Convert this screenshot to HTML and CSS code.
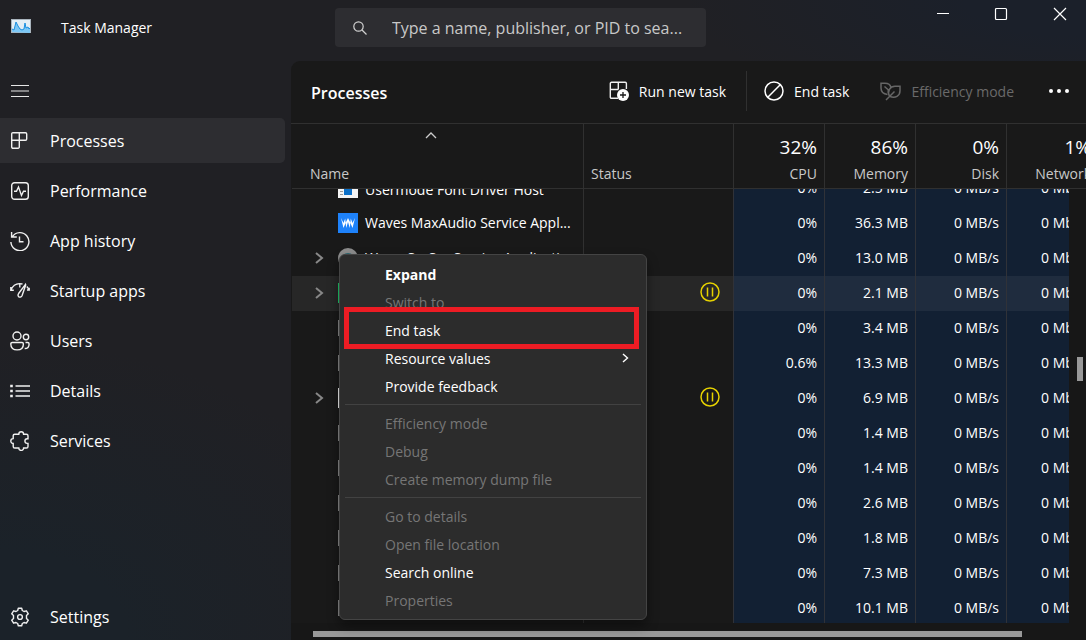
FILE: index.html
```html
<!DOCTYPE html>
<html lang="en">
<head>
<meta charset="utf-8">
<title>Task Manager</title>
<link rel="stylesheet" href="styles.css">
</head>
<body>
<div class="app">
  <header class="titlebar">
    <div class="brand">
      <svg class="brand-icon" width="20" height="14" viewBox="0 0 20 14"><rect x=".5" y=".5" width="19" height="13" fill="#e4eef5" stroke="#a9b4bd"/><path d="M1 13V10l2 1 2-8 2 4 2 3 2 1 2-1 1-6 1 5 2-1 1 2 1-1v5z" fill="#7cc7f5"/><path d="M1 10l2 1 2-8 2 4 2 3 2 1 2-1 1-6 1 5 2-1 1 2 1-1" fill="none" stroke="#1a8fe0"/></svg>
      <span>Task Manager</span>
    </div>
    <label class="search">
      <svg width="14" height="14" viewBox="0 0 14 14" fill="none" stroke="#d0d0d0" stroke-width="1.2"><circle cx="5.5" cy="5.5" r="4.7"/><path d="M9 9l4.5 4.5"/></svg>
      <input class="search-input" type="text" aria-label="Search" placeholder="Type a name, publisher, or PID to sea...">
    </label>
    <div class="window-buttons">
      <button aria-label="Minimize"><svg width="14" height="14" viewBox="0 0 14 14"><path d="M1 6.500h12" stroke="#fff"/></svg></button>
      <button aria-label="Maximize"><svg width="14" height="14" viewBox="0 0 14 14"><rect x="1.500" y="1.500" width="11" height="11" rx="1" fill="none" stroke="#fff" stroke-width="1.200"/></svg></button>
      <button class="close" aria-label="Close"><svg width="14" height="14" viewBox="0 0 14 14"><path d="M1 1l12 12M13 1L1 13" stroke="#fff" stroke-width="1.200"/></svg></button>
    </div>
  </header>

  <div class="body">
    <nav class="sidebar">
      <button class="hamburger" aria-label="Menu"><svg width="20" height="14" viewBox="0 0 20 14"><path d="M1 1.500h18M1 7h18M1 12.500h18" stroke="#e6e6e6" stroke-width="1.200"/></svg></button>
      <a class="nav-item active" href="#"><svg class="icon" viewBox="0 0 20 20"><path d="M3 1.700h12.500a1.200 1.200 0 0 1 1.200 1.200V8a1.200 1.200 0 0 1-1.200 1.200H9.300V16a1.200 1.200 0 0 1-1.200 1.200H3A1.200 1.200 0 0 1 1.700 16V3A1.200 1.200 0 0 1 3 1.700zM9.300 1.700v7.500M1.700 9.200h7.600"/></svg>Processes</a>
      <a class="nav-item" href="#"><svg class="icon" viewBox="0 0 20 20"><rect x="1.700" y="1.700" width="16.600" height="16.600" rx="2.800"/><path d="M4 10.300h2.500l2-4.300 3 8.500 2-4.200H16"/></svg>Performance</a>
      <a class="nav-item" href="#"><svg class="icon" viewBox="0 0 20 20"><path d="M1.600 1v5h5.200M2.300 5.800A9 9 0 1 1 .9 11M9.500 5.500v5.300h4"/></svg>App history</a>
      <a class="nav-item" href="#"><svg class="icon" viewBox="0 0 20 20"><path d="M.8 9.300C3 4 7.500 1.800 12.500 3M.8 6v3.300h3M9.800 3v3.600M19.200 9.500c-.5-1.700-1.300-2.900-2.400-4M17 9h2.200V6.800M15.500 3.300L8.600 12.500c-1 1.600-.6 3 .5 3.500 1.300.5 2.500-.2 3-1.500l3.600-10.600z"/></svg>Startup apps</a>
      <a class="nav-item" href="#"><svg class="icon" viewBox="0 0 20 20"><circle cx="7" cy="5" r="4"/><circle cx="16" cy="6" r="2.700"/><path d="M2.300 11.500H12a1.400 1.400 0 0 1 1.400 1.400c0 4-2.400 6-6.300 6S.8 16.900.8 12.900a1.400 1.400 0 0 1 1.500-1.400zM15.500 11.500h2.200a1.400 1.400 0 0 1 1.400 1.400c0 3-1.700 4.600-4.400 4.600"/></svg>Users</a>
      <a class="nav-item" href="#"><svg class="icon" viewBox="0 0 20 20"><path d="M5.500 5h14.500M5.500 10h14.500M5.500 15h14.500"/><path d="M.2 5h2.600M.2 10h2.600M.2 15h2.600" stroke-width="2.400"/></svg>Details</a>
      <a class="nav-item" href="#"><svg class="icon" viewBox="0 0 20 20"><path d="M4.800 3.200h4a2.400 2.400 0 0 1 4.800 0h2.800q1.600 0 1.600 1.600v3h-.8a2.300 2.300 0 0 0 0 4.600h.8v3q0 1.600-1.600 1.600h-2.800a2.400 2.400 0 0 1-4.800 0h-4q-1.600 0-1.600-1.600v-3a2.400 2.400 0 0 1 0-4.800v-3q0-1.400 1.600-1.400z"/></svg>Services</a>
      <a class="nav-item settings" href="#"><svg class="icon" viewBox="0 0 20 20"><path d="M8.300 1.200h3.400l.6 2.300 1.700 1 2.400-.7 1.900 3-1.800 1.700v2.900l1.800 1.800-1.900 3-2.400-.7-1.700 1-.6 2.300H8.300l-.6-2.300-1.700-1-2.400.7-1.900-3 1.800-1.800V8.500L1.700 6.800l1.900-3 2.400.7 1.700-1z" stroke-linejoin="round"/><circle cx="10" cy="10" r="2.400"/></svg>Settings</a>
    </nav>

    <main class="content">
      <div class="toolbar">
        <h1>Processes</h1>
        <button class="tool"><svg width="20" height="20" viewBox="0 0 20 20"><path d="M9 17.300H2.500A1.200 1.200 0 0 1 1.300 16V2.500a1.200 1.200 0 0 1 1.200-1.200h13.700a1.200 1.200 0 0 1 1.200 1.200V8M9.300 1.300v7.200M1.300 8.500h8" fill="none" stroke="#eee" stroke-width="1.400"/><circle cx="14" cy="14" r="6" fill="#fff"/><path d="M14 11v6M11 14h6" stroke="#1a1a1a" stroke-width="1.300"/></svg>Run new task</button>
        <span class="divider"></span>
        <button class="tool"><svg width="20" height="20" viewBox="0 0 20 20" fill="none" stroke="#fff" stroke-width="1.500"><circle cx="10" cy="10" r="9"/><path d="M3.800 16.200L16.200 3.800"/></svg>End task</button>
        <button class="tool" disabled><svg width="21" height="20" viewBox="0 0 21 20" fill="none" stroke="#666" stroke-width="1.500"><path d="M7.500 13.500C3.500 13 1 10.500 1 7V2.200h4c3.500 0 5.300 1.300 5.800 4M4.500 5.500l3.700 3.300v3.400M6 19L14.500 10.500M9.500 15.300C7 10 10 5.200 15 5.200h5v4.600c0 5-4.500 8-10.500 5.500"/></svg>Efficiency mode</button>
        <button class="more" aria-label="More options"><svg width="20" height="6" viewBox="0 0 20 6" fill="#fff"><circle cx="2" cy="3" r="2"/><circle cx="10" cy="3" r="2"/><circle cx="18" cy="3" r="2"/></svg></button>
      </div>

      <div class="grid">
        <table class="processes">
          <colgroup><col><col class="c-status"><col class="c-num"><col class="c-num"><col class="c-num"><col class="c-num"></colgroup>
          <thead>
            <tr>
              <th><svg class="sort" width="12" height="7" viewBox="0 0 12 7"><path d="M1 6l5-5 5 5" fill="none" stroke="#ccc" stroke-width="1.300"/></svg><span>Name</span></th>
              <th>Status</th>
              <th><b>32%</b><span>CPU</span></th>
              <th><b>86%</b><span>Memory</span></th>
              <th><b>0%</b><span>Disk</span></th>
              <th><b>1%</b><span>Network</span></th>
            </tr>
          </thead>
          <tbody>
            <tr class="partial"><td><div class="cell"><div class="proc"><i class="chev"></i><svg width="20" height="16" viewBox="0 0 20 16"><rect width="20" height="16" fill="#f4f4f4"/><path d="M2 9.500h3M2 12.500h3" stroke="#999"/><rect x="6" y="5" width="8" height="8" fill="#0c70c8"/></svg>Usermode Font Driver Host</div></div></td><td></td><td><div class="cell"><span>0%</span></div></td><td><div class="cell"><span>2.5 MB</span></div></td><td><div class="cell"><span>0 MB/s</span></div></td><td><div class="cell"><span>0 Mbps</span></div></td></tr>
            <tr><td><div class="proc"><i class="chev"></i><svg width="20" height="20" viewBox="0 0 20 20"><rect width="20" height="20" fill="#1e82fa"/><path d="M3 5l2.500 10L8 9l2-4 2 4 2.500 6L17 5l-2.500 5-1.700-4.500L11.800 15 10 9l-1.800 6-1-9.500L5.500 10z" fill="#fff"/></svg>Waves MaxAudio Service Appl...</div></td><td></td><td>0%</td><td>36.3 MB</td><td>0 MB/s</td><td>0 Mbps</td></tr>
            <tr><td><div class="proc"><i class="chev"><svg width="9" height="12" viewBox="0 0 9 12"><path d="M1 1l6 5-6 5"/></svg></i><svg width="20" height="20" viewBox="0 0 20 20"><circle cx="10" cy="10" r="10" fill="#8c8c8c"/><circle cx="10" cy="12" r="7" fill="#2c6670"/></svg>WavesSysSvc Service Application</div></td><td></td><td>0%</td><td>13.0 MB</td><td>0 MB/s</td><td>0 Mbps</td></tr>
            <tr class="selected"><td><div class="proc"><i class="chev"><svg width="9" height="12" viewBox="0 0 9 12"><path d="M1 1l6 5-6 5"/></svg></i><span class="app-icon green"></span></div></td><td><svg class="paused" width="20" height="20" viewBox="0 0 20 20"><circle cx="10" cy="10" r="9"/><path d="M7.500 5.500v9M12.500 5.500v9"/></svg></td><td>0%</td><td>2.1 MB</td><td>0 MB/s</td><td>0 Mbps</td></tr>
            <tr><td><div class="proc"><i class="chev"></i><span class="app-icon"></span></div></td><td></td><td>0%</td><td>3.4 MB</td><td>0 MB/s</td><td>0 Mbps</td></tr>
            <tr><td><div class="proc"><i class="chev"></i><span class="app-icon"></span></div></td><td></td><td>0.6%</td><td>13.3 MB</td><td>0 MB/s</td><td>0 Mbps</td></tr>
            <tr><td><div class="proc"><i class="chev"><svg width="9" height="12" viewBox="0 0 9 12"><path d="M1 1l6 5-6 5"/></svg></i><span class="app-icon white"></span></div></td><td><svg class="paused" width="20" height="20" viewBox="0 0 20 20"><circle cx="10" cy="10" r="9"/><path d="M7.500 5.500v9M12.500 5.500v9"/></svg></td><td>0%</td><td>6.9 MB</td><td>0 MB/s</td><td>0 Mbps</td></tr>
            <tr><td><div class="proc"><i class="chev"></i><span class="app-icon"></span></div></td><td></td><td>0%</td><td>1.4 MB</td><td>0 MB/s</td><td>0 Mbps</td></tr>
            <tr><td><div class="proc"><i class="chev"></i><span class="app-icon"></span></div></td><td></td><td>0%</td><td>1.4 MB</td><td>0 MB/s</td><td>0 Mbps</td></tr>
            <tr><td><div class="proc"><i class="chev"></i><span class="app-icon"></span></div></td><td></td><td>0%</td><td>2.6 MB</td><td>0 MB/s</td><td>0 Mbps</td></tr>
            <tr><td><div class="proc"><i class="chev"></i><span class="app-icon"></span></div></td><td></td><td>0%</td><td>1.8 MB</td><td>0 MB/s</td><td>0 Mbps</td></tr>
            <tr><td><div class="proc"><i class="chev"></i><span class="app-icon"></span></div></td><td></td><td>0%</td><td>7.3 MB</td><td>0 MB/s</td><td>0 Mbps</td></tr>
            <tr><td><div class="proc"><i class="chev"></i><span class="app-icon"></span></div></td><td></td><td>0%</td><td>10.1 MB</td><td>0 MB/s</td><td>0 Mbps</td></tr>
          </tbody>
        </table>
        <div class="vscroll"><div class="vthumb"></div></div>
      </div>
      <div class="hscroll"><div class="hthumb"></div></div>

      <div class="menu" role="menu">
        <button class="default" role="menuitem">Expand</button>
        <button role="menuitem" disabled>Switch to</button>
        <button role="menuitem">End task</button>
        <button role="menuitem">Resource values<svg width="7" height="10" viewBox="0 0 7 10"><path d="M1 1l4.500 4L1 9" fill="none" stroke="#fff" stroke-width="1.400"/></svg></button>
        <button role="menuitem">Provide feedback</button>
        <hr>
        <button role="menuitem" disabled>Efficiency mode</button>
        <button role="menuitem" disabled>Debug</button>
        <button role="menuitem" disabled>Create memory dump file</button>
        <hr>
        <button role="menuitem" disabled>Go to details</button>
        <button role="menuitem" disabled>Open file location</button>
        <button role="menuitem">Search online</button>
        <button role="menuitem" disabled>Properties</button>
        <div class="highlight"></div>
      </div>
    </main>
  </div>
</div>
</body>
</html>
```
FILE: styles.css
```css
* { box-sizing: border-box; }
body { margin: 0; background: #202024; color: #fff; font-family: "Open Sans", "Noto Sans", sans-serif; font-size: 14px; }
button { font: inherit; color: inherit; background: none; border: 0; padding: 0; }
a { color: inherit; text-decoration: none; }

.app {
  display: flex; flex-direction: column; height: 100vh; overflow: hidden;
  background:
    radial-gradient(ellipse 420px 300px at 0 100%, #1b2229 30%, transparent),
    radial-gradient(ellipse 400px 120px at 100% 0, #1b202a 30%, transparent),
    #202024;
}
.titlebar { display: grid; grid-template-columns: 335px minmax(0, 371px) 1fr; align-items: start; height: 61px; flex: none; }
.brand { display: flex; align-items: center; gap: 30px; padding: 18px 0 0 11px; line-height: 20px; }
.brand-icon { margin-bottom: 4px; }
.search { display: flex; align-items: center; gap: 25px; height: 39px; margin-top: 8px; padding: 0 12px 0 18px; background: #2d2d31; border-radius: 4px; }
.search svg { flex: none; }
.search-input { flex: 1; min-width: 0; padding: 0; border: 0; outline: 0; background: none; color: #fff; font: inherit; font-size: 16px; }
.search-input::placeholder { color: #c8c8c8; opacity: 1; }
.window-buttons { display: flex; justify-content: flex-end; }
.window-buttons button { display: flex; align-items: center; justify-content: center; width: 58px; height: 28px; }
.window-buttons .close { width: 52px; margin-left: 4px; }

.body { display: flex; flex: 1; min-height: 0; }
.sidebar { display: flex; flex-direction: column; gap: 5px; width: 291px; flex: none; }
.hamburger { display: flex; align-items: center; width: 48px; height: 52px; padding: 8px 0 0 10px; }
.nav-item { display: flex; align-items: center; gap: 20px; height: 45px; flex: none; margin-right: 6px; padding-left: 10px; border-radius: 0 5px 5px 0; font-size: 16px; }
.nav-item.active { background: #2d2d31; }
.settings { margin-top: auto; margin-bottom: 1px; }
.icon { width: 20px; height: 20px; flex: none; fill: none; stroke: #f0f0f0; stroke-width: 1.400; }

.content { position: relative; display: flex; flex-direction: column; flex: 1; min-width: 0; background: #191919; border-top-left-radius: 9px; overflow: hidden; }
.toolbar { display: flex; align-items: center; height: 63px; flex: none; padding: 0 17px 2px 20px; border-bottom: 1px solid #303030; }
h1 { flex: 1; margin: 4px 0 0; font-size: 16px; font-weight: 600; }
.tool { display: flex; align-items: center; gap: 10px; white-space: nowrap; }
.tool:disabled { color: #6a6a6a; }
.divider { width: 1px; height: 40px; margin: 0 17px 0 20px; background: #303030; }
.tool + .tool { margin-left: 31px; }
.more { display: flex; margin-left: 35px; }

.grid { position: relative; flex: 1; min-height: 0; padding-left: 1px; overflow: hidden; }
.processes { width: 100%; min-width: 806px; table-layout: fixed; border-collapse: separate; border-spacing: 0; }
.c-status { width: 150px; }
.c-num { width: 91px; }
th { height: 65px; padding: 0 7px 3px; vertical-align: bottom; text-align: right; font-weight: 400; line-height: 22px; color: #c8c8c8; border-right: 1px solid #303030; border-bottom: 1px solid #303030; }
th:nth-child(-n+2) { text-align: left; }
th:first-child { padding-left: 18px; }
th span, th b { display: block; }
th b { font-size: 19px; line-height: 32px; font-weight: 400; color: #fff; }
.sort { display: block; margin: 0 auto 24px 115px; }
td { height: 35px; padding: 0 7px; line-height: 34px; vertical-align: top; text-align: right; white-space: nowrap; overflow: hidden; background: #122033; border-right: 1px solid #303238; }
td:nth-child(-n+2) { background: none; }
td:first-child { padding: 0 7px 0 23px; text-align: left; border-right-color: #303030; }
td:last-child, th:last-child { border-right: 0; }
td:last-child { padding-left: 34px; text-align: left; }
.partial td { height: 17px; }
.cell { display: flex; align-items: flex-end; justify-content: flex-end; height: 17px; overflow: hidden; }
td:first-child .cell, td:last-child .cell { justify-content: flex-start; }
.cell > * { flex: none; height: 35px; }
.selected td { background: #1f2c3e; }
.selected td:nth-child(-n+2) { background: #272727; }
.proc { display: flex; align-items: center; gap: 7px; height: 33px; }
.proc > svg { flex: none; }
.chev { display: flex; width: 16px; flex: none; }
.chev svg { fill: none; stroke: #888; stroke-width: 2; }
.app-icon { width: 20px; height: 16px; border: 1px solid #888; }
.app-icon.green { height: 20px; border-color: #1ec86a; }
.app-icon.white { height: 20px; border-color: #eee; }
.paused { display: block; margin: 6px 6px 0 auto; fill: none; stroke: #e6d200; stroke-width: 1.500; }

.vscroll { position: absolute; top: 65px; right: 0; bottom: 0; width: 17px; padding-top: 168px; background: #171717; }
.vthumb { width: 6px; height: 24px; margin-left: 8px; background: #999; }
.hscroll { flex: none; height: 17px; padding: 8px 64px 3px 22px; background: #171717; }
.hthumb { height: 6px; background: #999; }

.menu { position: absolute; left: 48px; top: 193px; width: 308px; padding: 5px; background: #2c2c2c; border: 1px solid #444; border-radius: 6px; box-shadow: 0 6px 12px rgba(0, 0, 0, .4); }
.menu button { display: flex; align-items: center; justify-content: space-between; width: 100%; height: 28px; padding: 0 12px 0 40px; }
.menu button:disabled { color: #767676; }
.menu .default { font-weight: 700; }
.menu hr { height: 1px; margin: 4px 0; border: 0; background: #424242; }
.highlight { position: absolute; left: 4px; top: 52px; width: 295px; height: 42px; border: 5px solid #ed1c24; }
```
